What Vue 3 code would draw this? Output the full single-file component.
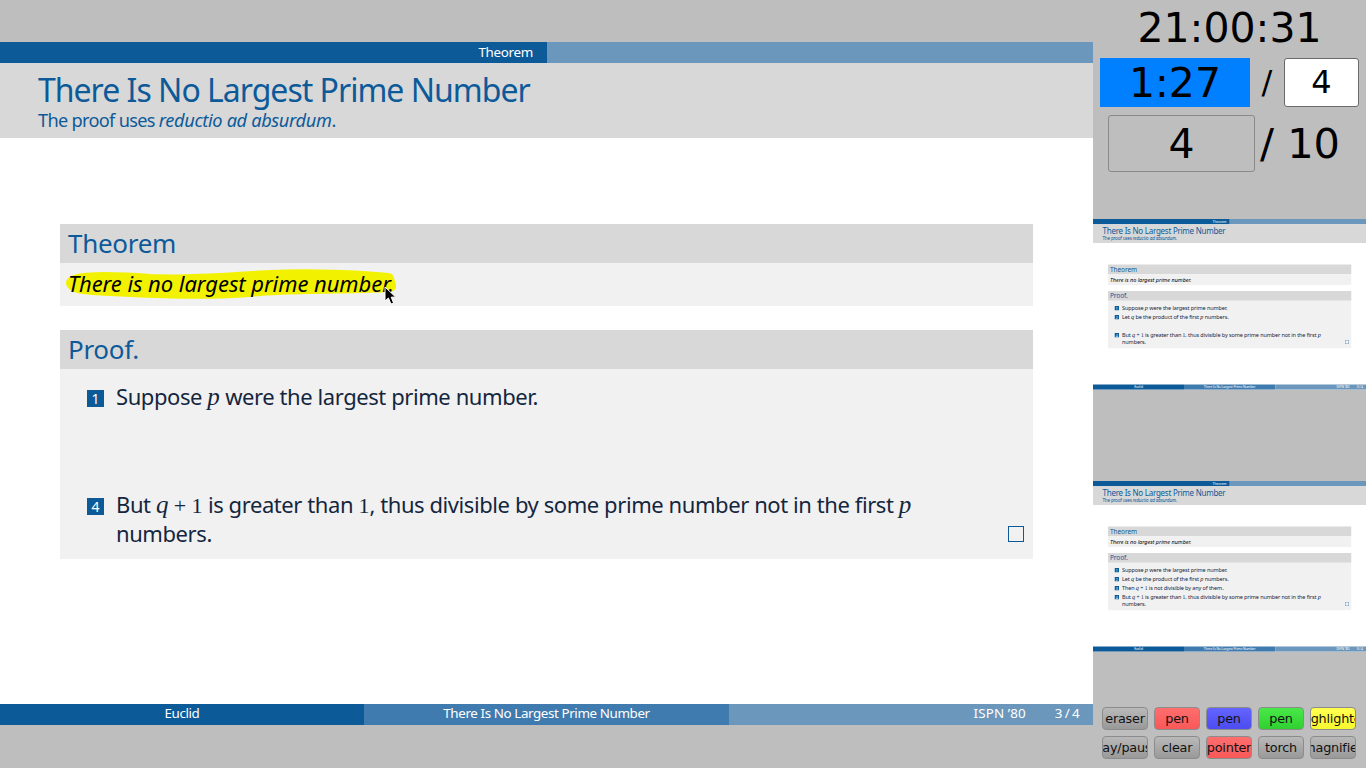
<script setup>
const mainVisible = [1, 4]
const thumbs = [
  { id: 'next', visible: [1, 2, 4] },
  { id: 'last', visible: [1, 2, 3, 4] },
]

const tools = [
  { label: 'eraser', cls: '' },
  { label: 'pen', cls: 'red' },
  { label: 'pen', cls: 'blue' },
  { label: 'pen', cls: 'green' },
  { label: 'highlighter', cls: 'yellow' },
  { label: 'play/pause', cls: '' },
  { label: 'clear', cls: '' },
  { label: 'pointer', cls: 'red' },
  { label: 'torch', cls: '' },
  { label: 'magnifier', cls: '' },
]
</script>

<template>
  <div class="window">
    <main class="stage">
      <div class="frame main-frame">
        <div class="slide">
          <div class="nav">
            <div class="nav-left">Theorem</div>
            <div class="nav-right"></div>
          </div>
          <div class="titlebar">
            <div class="title">There Is No Largest Prime Number</div>
            <div class="subtitle">The proof uses <em>reductio ad absurdum</em>.</div>
          </div>
          <div class="body">
            <section class="block">
              <h3 class="block-title">Theorem</h3>
              <div class="block-body theorem">
                <svg class="marker" width="340" height="40" viewBox="0 0 340 40">
                  <path d="M12 20 C14 14 50 14 90 17 C130 19 170 15 210 13 C250 11 300 13 328 16 L330 23 C290 25 240 24 200 27 C160 31 110 30 70 28 C40 26 14 27 12 20 Z" fill="#f2f200" stroke="#f2f200" stroke-width="12" stroke-linejoin="round" />
                </svg>
                <span class="theorem-text">There is no largest prime number.</span>
              </div>
            </section>
            <section class="block proof">
              <h3 class="block-title proof-title">Proof.</h3>
              <div class="block-body list">
                <div class="item" :class="{ off: !mainVisible.includes(1) }">
                  <span class="badge">1</span>
                  <span>Suppose <i class="math">p</i> were the largest prime number.</span>
                </div>
                <div class="item" :class="{ off: !mainVisible.includes(2) }">
                  <span class="badge">2</span>
                  <span>Let <i class="math">q</i> be the product of the first <i class="math">p</i> numbers.</span>
                </div>
                <div class="item" :class="{ off: !mainVisible.includes(3) }">
                  <span class="badge">3</span>
                  <span>Then <i class="math">q</i> <span class="math-up">+ 1</span> is not divisible by any of them.</span>
                </div>
                <div class="item" :class="{ off: !mainVisible.includes(4) }">
                  <span class="badge">4</span>
                  <span>But <i class="math">q</i> <span class="math-up">+ 1</span> is greater than <span class="math-up">1</span>, thus divisible by some prime number not in the first <i class="math">p</i> numbers.</span>
                </div>
                <span class="qed"></span>
              </div>
            </section>
          </div>
          <div class="foot">
            <div class="foot-a">Euclid</div>
            <div class="foot-b">There Is No Largest Prime Number</div>
            <div class="foot-c"><span class="conf">ISPN ’80</span><span class="pageno">3 / 4</span></div>
          </div>
          <svg class="cursor" width="14" height="20" viewBox="0 0 14 20">
            <path d="M1 1 L1 15 L4.4 12 L7 18 L9.6 17 L7.2 11.2 L11.6 11 Z" fill="#000" stroke="#fff" stroke-width="1" />
          </svg>
        </div>
      </div>
    </main>

    <aside class="side">
      <div class="clock">21:00:31</div>
      <div class="timer-row">
        <div class="timer">1:27</div>
        <div class="slash">/</div>
        <div class="target">4</div>
      </div>
      <div class="count-row">
        <div class="current">4</div>
        <div class="total">/ 10</div>
      </div>

      <div v-for="t in thumbs" :key="t.id" class="thumb-box">
        <div class="frame thumb-frame">
          <div class="slide">
            <div class="nav">
              <div class="nav-left">Theorem</div>
              <div class="nav-right"></div>
            </div>
            <div class="titlebar">
              <div class="title">There Is No Largest Prime Number</div>
              <div class="subtitle">The proof uses <em>reductio ad absurdum</em>.</div>
            </div>
            <div class="body">
              <section class="block">
                <h3 class="block-title">Theorem</h3>
                <div class="block-body theorem">
                  <span class="theorem-text">There is no largest prime number.</span>
                </div>
              </section>
              <section class="block proof">
                <h3 class="block-title proof-title">Proof.</h3>
                <div class="block-body list">
                  <div class="item">
                    <span class="badge">1</span>
                    <span>Suppose <i class="math">p</i> were the largest prime number.</span>
                  </div>
                  <div class="item">
                    <span class="badge">2</span>
                    <span>Let <i class="math">q</i> be the product of the first <i class="math">p</i> numbers.</span>
                  </div>
                  <div class="item" :class="{ off: !t.visible.includes(3) }">
                    <span class="badge">3</span>
                    <span>Then <i class="math">q</i> <span class="math-up">+ 1</span> is not divisible by any of them.</span>
                  </div>
                  <div class="item">
                    <span class="badge">4</span>
                    <span>But <i class="math">q</i> <span class="math-up">+ 1</span> is greater than <span class="math-up">1</span>, thus divisible by some prime number not in the first <i class="math">p</i> numbers.</span>
                  </div>
                  <span class="qed"></span>
                </div>
              </section>
            </div>
            <div class="foot">
              <div class="foot-a">Euclid</div>
              <div class="foot-b">There Is No Largest Prime Number</div>
              <div class="foot-c"><span class="conf">ISPN ’80</span><span class="pageno">3 / 4</span></div>
            </div>
          </div>
        </div>
      </div>

      <div class="tools">
        <button v-for="(b, i) in tools" :key="i" class="tool" :class="b.cls">{{ b.label }}</button>
      </div>
    </aside>
  </div>
</template>

<style>
html, body { margin: 0; background: #bebebe; overflow: hidden; }
</style>

<style scoped>
.window {
  display: grid;
  grid-template-columns: 1093px 273px;
  width: 1366px;
  height: 768px;
  background: #bebebe;
  overflow: hidden;
}
.stage {
  padding-top: 42px;
}
.frame { width: 1093px; height: 683px; }
.slide {
  position: relative;
  display: flex;
  flex-direction: column;
  width: 1093px;
  height: 683px;
  background: #fff;
  font-family: "Noto Sans", sans-serif;
  color: #14263e;
  overflow: hidden;
}

.nav { display: flex; height: 21px; flex: none; }
.nav-left {
  width: 547px;
  background: #0d5a99;
  color: #fff;
  font-size: 13.4px;
  line-height: 20px;
  text-align: right;
  padding-right: 14px;
  box-sizing: border-box;
  letter-spacing: -0.3px;
}
.nav-right { flex: 1; background: #6c97bc; }

.titlebar {
  flex: none;
  height: 75px;
  box-sizing: border-box;
  padding: 8px 38px 0;
  background: #d8d8d8;
  color: #0d5a99;
}
.title { font-size: 32px; line-height: 38px; letter-spacing: -1px; white-space: nowrap; }
.subtitle { font-size: 18.2px; line-height: 23px; letter-spacing: -0.7px; white-space: nowrap; }
.subtitle em { letter-spacing: -0.35px; }

.body { flex: 1; padding: 86px 60px 0; }
.block-title {
  margin: 0;
  height: 39px;
  background: #d8d8d8;
  color: #0d5a99;
  font-weight: 400;
  font-size: 26px;
  line-height: 39px;
  padding-left: 8px;
  letter-spacing: -0.3px;
}
.proof-title { line-height: 38px; }
.block-body { position: relative; background: #f1f1f1; }
.theorem {
  height: 43px;
  box-sizing: border-box;
  padding: 5px 8px 0;
  font-size: 22px;
  line-height: 30px;
  font-style: italic;
  color: #000;
  letter-spacing: -0.06px;
}
.marker { position: absolute; left: 0; top: 0; }
.theorem-text { position: relative; }

.proof { margin-top: 24px; }
.list {
  box-sizing: border-box;
  padding: 13px 27px 11px;
  font-size: 22px;
  line-height: 29px;
  letter-spacing: -0.42px;
}
.item { display: flex; align-items: flex-start; width: 830px; gap: 12px; margin-bottom: 7px; }
.item:nth-last-child(2) { margin-bottom: 0; }
.off { visibility: hidden; }
.badge {
  flex: none;
  width: 17px;
  height: 17px;
  margin-top: 8px;
  background: #0d5a99;
  color: #fff;
  font-size: 14px;
  line-height: 17px;
  text-align: center;
  letter-spacing: 0;
}
.math { font-family: "Liberation Serif", serif; font-size: 25px; line-height: 0; letter-spacing: 0; }
.math-up { font-family: "Liberation Serif", serif; font-size: 22px; line-height: 0; letter-spacing: 0; }
.qed {
  position: absolute;
  right: 9px;
  bottom: 17px;
  width: 14px;
  height: 14px;
  border: 1px solid #0d5a99;
}

.foot { display: flex; flex: none; height: 21px; color: #fff; font-size: 13.4px; line-height: 19px; letter-spacing: -0.4px; }
.foot-a { width: 364px; background: #0d5a99; text-align: center; }
.foot-b { width: 365px; background: #3f7bae; text-align: center; }
.foot-c { flex: 1; display: flex; justify-content: flex-end; gap: 29px; padding-right: 14px; background: #6c97bc; }
.conf { letter-spacing: 0.1px; }
.pageno { letter-spacing: -0.6px; }

.cursor { position: absolute; left: 384px; top: 244px; }

.side {
  display: flex;
  flex-direction: column;
  font-family: "DejaVu Sans", sans-serif;
  color: #000;
}
.clock { height: 58px; font-size: 41px; line-height: 56px; text-align: center; }
.timer-row { display: flex; height: 49px; padding-left: 7px; }
.timer { width: 150px; background: #0080ff; font-size: 41px; line-height: 50px; text-align: center; }
.slash { width: 34px; font-size: 32px; line-height: 49px; text-align: center; }
.target {
  width: 75px;
  box-sizing: border-box;
  background: #fff;
  border: 1px solid #6a6a6a;
  border-radius: 3px;
  font-size: 32px;
  line-height: 47px;
  text-align: center;
}
.count-row { display: flex; height: 57px; margin-top: 8px; padding-left: 15px; }
.current {
  width: 147px;
  box-sizing: border-box;
  background: #bebebe;
  border: 1px solid #8a8a8a;
  border-radius: 3px;
  font-size: 41px;
  line-height: 56px;
  text-align: center;
}
.total { margin-left: 5px; font-size: 41.5px; line-height: 58px; white-space: nowrap; }

.thumb-box { width: 273px; height: 171px; margin-top: 47px; overflow: hidden; }
.thumb-box + .thumb-box { margin-top: 91px; }
.thumb-frame { transform: scale(0.25); transform-origin: top left; }

.tools {
  display: grid;
  grid-template-columns: repeat(5, 46px);
  grid-auto-rows: 23px;
  gap: 6px;
  margin-top: auto;
  padding: 0 0 9px 9px;
}
.tool {
  display: flex;
  align-items: center;
  justify-content: center;
  padding: 0;
  border: 1px solid #8c8c8c;
  border-radius: 4px;
  background: linear-gradient(#b9b9b9, #999);
  color: #111;
  font-family: "DejaVu Sans", sans-serif;
  font-size: 12.8px;
  letter-spacing: -0.2px;
  white-space: nowrap;
  overflow: hidden;
}
.red { background: linear-gradient(#ff6e6e, #f85858); }
.blue { background: linear-gradient(#6464ff, #4c4cf0); }
.green { background: linear-gradient(#48e848, #30d030); }
.yellow { background: linear-gradient(#ffff50, #f8f830); }
</style>
